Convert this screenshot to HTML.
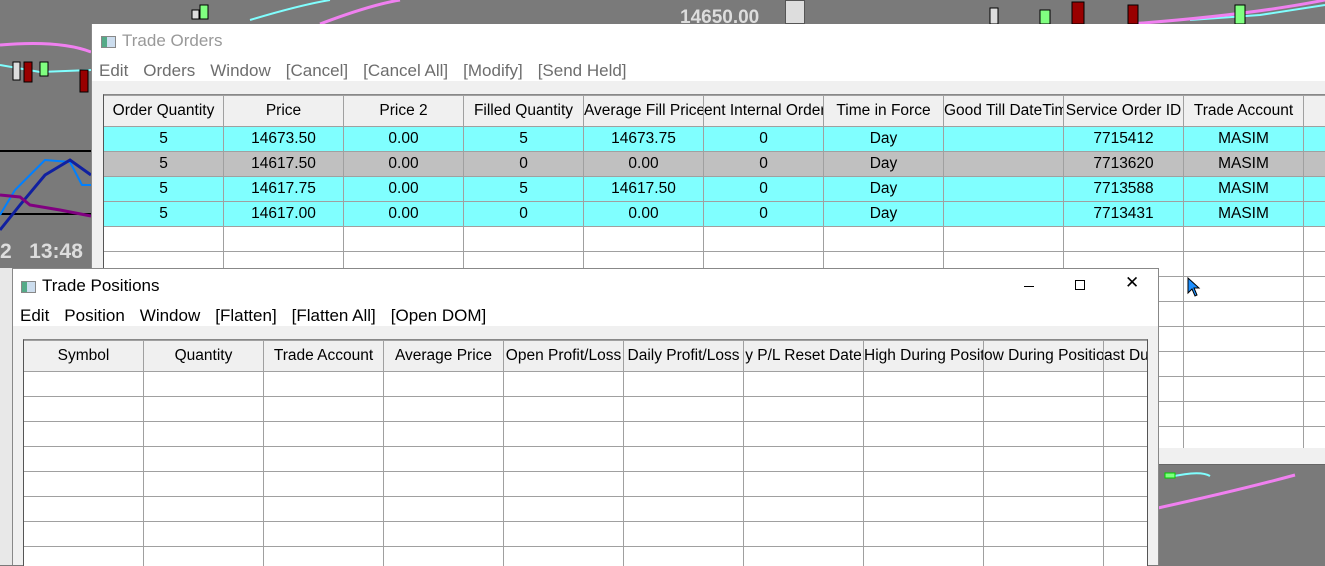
<!DOCTYPE html>
<html><head><meta charset="utf-8"><style>
*{margin:0;padding:0;box-sizing:border-box}
body{width:1325px;height:565px;overflow:hidden;background:#7a7a7a;position:relative;font-family:"Liberation Sans",sans-serif;}
.abs{position:absolute}
table{border-collapse:collapse;table-layout:fixed;font-size:15.5px;color:#000}
td{border:1px solid #a0a0a0;text-align:center;height:25px;white-space:nowrap;overflow:hidden;padding:0}
tr.h td{background:#f0f0f0;height:31px}
tr.c td{background:#80ffff}
tr.g td{background:#c0c0c0}
.menu span{margin-right:15px}
.icon{display:inline-block;width:15px;height:12px;border:1px solid #888;background:linear-gradient(90deg,#5a8 0 40%,#cde 40%);vertical-align:middle;margin-right:6px}
</style></head><body>
<div class="abs" style="left:0;top:150px;width:91px;height:2px;background:#000"></div>
<div class="abs" style="left:0;top:213px;width:91px;height:2px;background:#000"></div>
<svg class="abs" style="left:0;top:0" width="1325" height="565">
<path d="M0 45 Q60 40 91 52" stroke="#f080f0" stroke-width="3" fill="none"/>
<path d="M0 65 L40 72 L91 70" stroke="#80ffff" stroke-width="2" fill="none"/>
<path d="M0 215 L15 190 L35 170 L45 160 L70 162 L82 185 L91 185" stroke="#0080ff" stroke-width="2" fill="none"/>
<path d="M0 230 L20 205 L45 175 L70 160 L91 175" stroke="#1020a0" stroke-width="3" fill="none"/>
<path d="M0 195 L20 197 L30 205 L60 210 L91 216" stroke="#800080" stroke-width="3" fill="none"/>
<path d="M250 20 Q300 5 330 0" stroke="#80ffff" stroke-width="2" fill="none"/>
<path d="M320 24 Q370 5 400 0" stroke="#f080f0" stroke-width="3" fill="none"/>
<path d="M1170 477 Q1200 470 1210 476" stroke="#80ffff" stroke-width="2" fill="none"/>
<path d="M1158 508 Q1240 490 1295 475" stroke="#f080f0" stroke-width="3" fill="none"/>
<path d="M1190 20 L1260 15 L1325 5" stroke="#80ffff" stroke-width="2" fill="none"/>
<path d="M1130 24 Q1250 15 1325 0" stroke="#f080f0" stroke-width="3" fill="none"/>
<rect x="13" y="62" width="7" height="18" fill="#ddd" stroke="#000"/>
<rect x="40" y="62" width="8" height="14" fill="#80ff80" stroke="#000"/>
<rect x="24" y="62" width="8" height="20" fill="#900" stroke="#000"/>
<rect x="80" y="70" width="8" height="22" fill="#900" stroke="#000"/>
<rect x="200" y="5" width="8" height="14" fill="#80ff80" stroke="#000"/>
<rect x="192" y="10" width="7" height="9" fill="#ddd" stroke="#000"/>
<rect x="990" y="8" width="8" height="16" fill="#ddd" stroke="#000"/>
<rect x="1072" y="2" width="12" height="22" fill="#900" stroke="#000"/>
<rect x="1128" y="5" width="10" height="19" fill="#900" stroke="#000"/>
<rect x="1040" y="10" width="10" height="14" fill="#80ff80" stroke="#000"/>
<rect x="1235" y="5" width="10" height="19" fill="#80ff80" stroke="#000"/>
<rect x="1165" y="473" width="10" height="5" fill="#80ff80" stroke="#0c0"/>
</svg>
<div class="abs" style="left:680px;top:7px;color:#ddd;font-weight:bold;font-size:19px">14650.00</div>
<div class="abs" style="left:785px;top:0;width:20px;height:24px;background:#ddd;border:1px solid #555"></div>
<div class="abs" style="left:0;top:240px;color:#ddd;font-weight:bold;font-size:21px">2&nbsp;&nbsp;&nbsp;13:48</div>
<div class="abs" style="left:0;top:268px;width:12px;height:297px;background:#e8e8e8"></div>

<div class="abs" style="left:91px;top:24px;width:1234px;height:441px;background:#f0f0f0;border-left:1px solid #888;border-bottom:1px solid #666">
 <div style="background:#fff;height:57px">
  <div style="position:absolute;left:9px;top:7px;font-size:17px;color:#999"><span class="icon"></span>Trade Orders</div>
  <div class="menu" style="position:absolute;left:7px;top:37px;font-size:17px;color:#6d6d6d"><span>Edit</span><span>Orders</span><span>Window</span><span>[Cancel]</span><span>[Cancel All]</span><span>[Modify]</span><span>[Send Held]</span></div>
 </div>
 <div style="position:absolute;left:11px;top:70px;width:1223px;height:354px;background:#fff;border-left:1px solid #555;border-top:1px solid #888;overflow:hidden">
 <table style="width:1320px;margin-left:-1px">
 <colgroup><col style="width:120px"><col style="width:120px"><col style="width:120px"><col style="width:120px"><col style="width:120px"><col style="width:120px"><col style="width:120px"><col style="width:120px"><col style="width:120px"><col style="width:120px"><col style="width:120px"></colgroup>
 <tr class="h"><td>Order Quantity</td><td>Price</td><td>Price 2</td><td>Filled Quantity</td><td>Average Fill Price</td><td>ent Internal Order</td><td>Time in Force</td><td>Good Till DateTime</td><td>Service Order ID</td><td>Trade Account</td><td></td></tr>
 <tr class="c"><td>5</td><td>14673.50</td><td>0.00</td><td>5</td><td>14673.75</td><td>0</td><td>Day</td><td></td><td>7715412</td><td>MASIM</td><td></td></tr>
 <tr class="g"><td>5</td><td>14617.50</td><td>0.00</td><td>0</td><td>0.00</td><td>0</td><td>Day</td><td></td><td>7713620</td><td>MASIM</td><td></td></tr>
 <tr class="c"><td>5</td><td>14617.75</td><td>0.00</td><td>5</td><td>14617.50</td><td>0</td><td>Day</td><td></td><td>7713588</td><td>MASIM</td><td></td></tr>
 <tr class="c"><td>5</td><td>14617.00</td><td>0.00</td><td>0</td><td>0.00</td><td>0</td><td>Day</td><td></td><td>7713431</td><td>MASIM</td><td></td></tr>
 <tr><td></td><td></td><td></td><td></td><td></td><td></td><td></td><td></td><td></td><td></td><td></td></tr>
 <tr><td></td><td></td><td></td><td></td><td></td><td></td><td></td><td></td><td></td><td></td><td></td></tr>
 <tr><td></td><td></td><td></td><td></td><td></td><td></td><td></td><td></td><td></td><td></td><td></td></tr>
 <tr><td></td><td></td><td></td><td></td><td></td><td></td><td></td><td></td><td></td><td></td><td></td></tr>
 <tr><td></td><td></td><td></td><td></td><td></td><td></td><td></td><td></td><td></td><td></td><td></td></tr>
 <tr><td></td><td></td><td></td><td></td><td></td><td></td><td></td><td></td><td></td><td></td><td></td></tr>
 <tr><td></td><td></td><td></td><td></td><td></td><td></td><td></td><td></td><td></td><td></td><td></td></tr>
 <tr><td></td><td></td><td></td><td></td><td></td><td></td><td></td><td></td><td></td><td></td><td></td></tr>
 <tr><td></td><td></td><td></td><td></td><td></td><td></td><td></td><td></td><td></td><td></td><td></td></tr>
 </table>
 </div>
</div>
<svg class="abs" style="left:1187px;top:277px" width="14" height="20"><path d="M1 1 L1 16 L5 12 L8 19 L10 18 L7 11 L12 11 Z" fill="#1e90ff" stroke="#000" stroke-width="1"/></svg>

<div class="abs" style="left:12px;top:268px;width:1147px;height:297px;background:#f0f0f0;border:1px solid #888;border-bottom:none">
 <div style="background:#fff;height:57px;position:relative">
  <div style="position:absolute;left:8px;top:7px;font-size:17px;color:#000"><span class="icon"></span>Trade Positions</div>
  <div style="position:absolute;left:1011px;top:17px;width:10px;height:1px;background:#000"></div>
  <div style="position:absolute;left:1062px;top:11px;width:10px;height:10px;border:1px solid #000"></div>
  <div style="position:absolute;left:1112px;top:4px;font-size:17px;color:#000">&#x2715;</div>
  <div class="menu" style="position:absolute;left:7px;top:37px;font-size:17px;color:#000"><span>Edit</span><span>Position</span><span>Window</span><span>[Flatten]</span><span>[Flatten All]</span><span>[Open DOM]</span></div>
 </div>
 <div style="position:absolute;left:10px;top:70px;width:1125px;height:227px;background:#fff;border-left:1px solid #555;border-top:1px solid #888;border-right:1px solid #555;overflow:hidden">
 <table style="width:1200px;margin-left:-1px">
 <colgroup><col style="width:120px"><col style="width:120px"><col style="width:120px"><col style="width:120px"><col style="width:120px"><col style="width:120px"><col style="width:120px"><col style="width:120px"><col style="width:120px"><col style="width:120px"></colgroup>
 <tr class="h"><td>Symbol</td><td>Quantity</td><td>Trade Account</td><td>Average Price</td><td>Open Profit/Loss</td><td>Daily Profit/Loss</td><td>y P/L Reset Date</td><td>High During Position</td><td>ow During Position</td><td style="text-align:left">ast Du</td></tr>
 <tr><td></td><td></td><td></td><td></td><td></td><td></td><td></td><td></td><td></td><td></td></tr>
 <tr><td></td><td></td><td></td><td></td><td></td><td></td><td></td><td></td><td></td><td></td></tr>
 <tr><td></td><td></td><td></td><td></td><td></td><td></td><td></td><td></td><td></td><td></td></tr>
 <tr><td></td><td></td><td></td><td></td><td></td><td></td><td></td><td></td><td></td><td></td></tr>
 <tr><td></td><td></td><td></td><td></td><td></td><td></td><td></td><td></td><td></td><td></td></tr>
 <tr><td></td><td></td><td></td><td></td><td></td><td></td><td></td><td></td><td></td><td></td></tr>
 <tr><td></td><td></td><td></td><td></td><td></td><td></td><td></td><td></td><td></td><td></td></tr>
 <tr><td></td><td></td><td></td><td></td><td></td><td></td><td></td><td></td><td></td><td></td></tr>
 </table>
 </div>
</div>
</body></html>
